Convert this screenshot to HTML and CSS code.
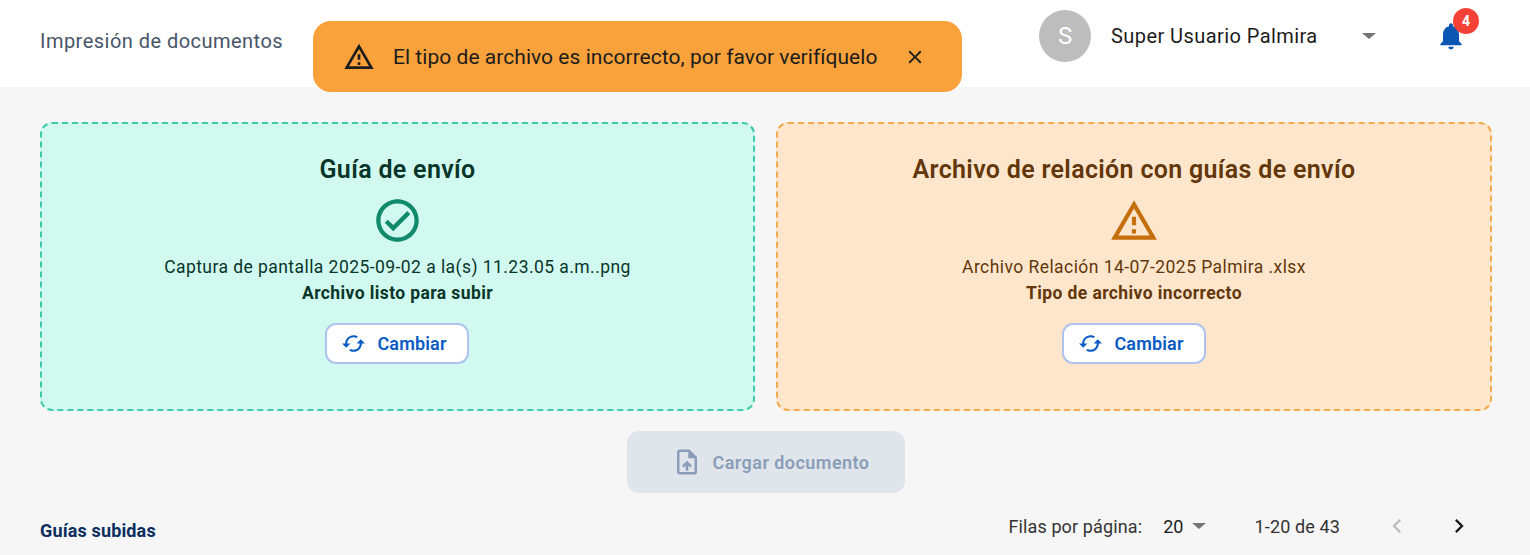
FILE: index.html
```html
<!DOCTYPE html>
<html lang="es">
<head>
    <meta charset="UTF-8">
    <meta name="viewport" content="width=device-width, initial-scale=1.0">
    <title>Impresión de documentos</title>
    <link rel="stylesheet" href="styles.css">
</head>
<body>
    <header class="topbar">
        <h1 class="page-title">Impresión de documentos</h1>
        <div class="user-area">
            <div class="avatar">S</div>
            <span class="user-name">Super Usuario Palmira</span>
            <span class="caret caret-user"></span>
            <div class="bell">
                <svg viewBox="0 0 24 24" width="32" height="32"><path fill="#0a56b4" d="M12 22c1.1 0 2-.9 2-2h-4c0 1.1.9 2 2 2zm6-6v-5c0-3.07-1.63-5.64-4.5-6.32V4c0-.83-.67-1.5-1.5-1.5s-1.5.67-1.5 1.5v.68C7.64 5.36 6 7.92 6 11v5l-2 2v1h16v-1l-2-2z"/></svg>
                <span class="badge">4</span>
            </div>
        </div>
    </header>

    <div class="toast">
        <svg viewBox="0 0 24 24" width="32" height="32"><path fill="#1c1c1c" d="M12 5.99 19.53 19H4.47L12 5.99M12 2 1 21h22L12 2zm1 14h-2v2h2v-2zm0-6h-2v4h2v-4z"/></svg>
        <span class="toast-text">El tipo de archivo es incorrecto, por favor verifíquelo</span>
        <svg class="toast-close" viewBox="0 0 24 24" width="22" height="22"><path fill="#1c1c1c" d="M19 6.41 17.59 5 12 10.59 6.41 5 5 6.41 10.59 12 5 17.59 6.41 19 12 13.41 17.59 19 19 17.59 13.41 12z"/></svg>
    </div>

    <main class="content">
        <section class="cards">
            <div class="card card-ok">
                <h2>Guía de envío</h2>
                <svg class="card-icon" viewBox="0 0 24 24" width="51" height="51"><path fill="#0f8a6a" d="M12 2C6.48 2 2 6.48 2 12s4.48 10 10 10 10-4.48 10-10S17.52 2 12 2zm0 18c-4.41 0-8-3.59-8-8s3.59-8 8-8 8 3.59 8 8-3.59 8-8 8zm4.59-12.42L10 14.17l-2.59-2.58L6 13l4 4 8-8z"/></svg>
                <p class="file-name">Captura de pantalla 2025-09-02 a la(s) 11.23.05 a.m..png</p>
                <p class="file-status">Archivo listo para subir</p>
                <button class="change-btn">
                    <svg viewBox="0 0 24 24" width="25" height="25"><path fill="#0a5bc4" d="M19 8l-4 4h3c0 3.31-2.69 6-6 6-1.01 0-1.97-.25-2.8-.7l-1.46 1.46C8.97 19.54 10.43 20 12 20c4.42 0 8-3.58 8-8h3l-4-4zM6 12c0-3.31 2.69-6 6-6 1.01 0 1.97.25 2.8.7l1.46-1.46C15.03 4.46 13.57 4 12 4c-4.42 0-8 3.58-8 8H1l4 4 4-4H6z"/></svg>
                    Cambiar
                </button>
            </div>
            <div class="card card-warn">
                <h2>Archivo de relación con guías de envío</h2>
                <svg class="card-icon" viewBox="0 0 24 24" width="50" height="50"><path fill="#c46f0c" d="M12 5.99 19.53 19H4.47L12 5.99M12 2 1 21h22L12 2zm1 14h-2v2h2v-2zm0-6h-2v4h2v-4z"/></svg>
                <p class="file-name">Archivo Relación 14-07-2025 Palmira .xlsx</p>
                <p class="file-status">Tipo de archivo incorrecto</p>
                <button class="change-btn">
                    <svg viewBox="0 0 24 24" width="25" height="25"><path fill="#0a5bc4" d="M19 8l-4 4h3c0 3.31-2.69 6-6 6-1.01 0-1.97-.25-2.8-.7l-1.46 1.46C8.97 19.54 10.43 20 12 20c4.42 0 8-3.58 8-8h3l-4-4zM6 12c0-3.31 2.69-6 6-6 1.01 0 1.97.25 2.8.7l1.46-1.46C15.03 4.46 13.57 4 12 4c-4.42 0-8 3.58-8 8H1l4 4 4-4H6z"/></svg>
                    Cambiar
                </button>
            </div>
        </section>

        <div class="upload-row">
            <button class="upload-btn" disabled>
                <svg viewBox="0 0 24 24" width="30" height="30"><path fill="#8a9db8" d="M14 2H6c-1.1 0-2 .9-2 2v16c0 1.1.9 2 2 2h12c1.1 0 2-.9 2-2V8l-6-6zm4 18H6V4h7v5h5v11zM8 15.01l1.41 1.41L11 14.84V19h2v-4.16l1.59 1.59L16 15.01 12.01 11 8 15.01z"/></svg>
                Cargar documento
            </button>
        </div>

        <div class="table-head">
            <span class="table-title">Guías subidas</span>
            <div class="pagination">
                <span class="rows-label">Filas por página:</span>
                <span class="rows-value">20</span>
                <span class="caret"></span>
                <span class="range">1-20 de 43</span>
                <svg class="page-prev" viewBox="0 0 24 24" width="28" height="28"><path fill="#bdbdbd" d="M15.41 7.41 14 6l-6 6 6 6 1.41-1.41L10.83 12z"/></svg>
                <svg class="page-next" viewBox="0 0 24 24" width="28" height="28"><path fill="#1c1c1c" d="M10 6 8.59 7.41 13.17 12l-4.58 4.59L10 18l6-6z"/></svg>
            </div>
        </div>
    </main>
</body>
</html>
```

FILE: styles.css
```css
* {
    box-sizing: border-box;
}

body {
    font-family: 'Roboto', sans-serif;
    background-color: #f6f6f6;
    margin: 0;
    padding: 0;
    overflow: hidden;
}

.topbar {
    height: 87px;
    background-color: #fff;
    display: flex;
    justify-content: space-between;
    align-items: center;
    padding: 0 63px 0 40px;
}

.page-title {
    font-size: 20px;
    font-weight: 400;
    letter-spacing: 0.47px;
    margin: 0 0 6px;
    color: #475569;
}

.user-area {
    display: flex;
    align-items: center;
    margin-bottom: 15px;
}

.avatar {
    width: 52px;
    height: 52px;
    border-radius: 50%;
    background-color: #bdbdbd;
    color: #fff;
    font-size: 24px;
    display: flex;
    align-items: center;
    justify-content: center;
}

.user-name {
    font-size: 20px;
    letter-spacing: 0.43px;
    color: #1c1c1c;
    margin-left: 20px;
    width: 251px;
}

.caret {
    width: 0;
    height: 0;
    border-left: 7px solid transparent;
    border-right: 7px solid transparent;
    border-top: 6px solid #757575;
}

.bell {
    position: relative;
    margin-left: 59px;
    display: flex;
}

.badge {
    position: absolute;
    top: -12px;
    left: 18px;
    width: 26px;
    height: 26px;
    border-radius: 50%;
    background-color: #f44336;
    color: #fff;
    font-size: 14px;
    font-weight: 700;
    display: flex;
    align-items: center;
    justify-content: center;
}

.toast {
    position: absolute;
    top: 21px;
    left: 313px;
    width: 649px;
    height: 71px;
    background-color: #f9a23b;
    border-radius: 18px;
    display: flex;
    align-items: center;
    padding: 0 0 0 30px;
}

.toast-text {
    font-size: 21px;
    letter-spacing: 0.04px;
    color: #1c1c1c;
    margin-left: 18px;
}

.toast-close {
    margin-left: 27px;
}

.content {
    padding: 35px 38px 0 40px;
}

.cards {
    display: grid;
    grid-template-columns: 715px 1fr;
    gap: 21px;
}

.card {
    height: 289px;
    border-radius: 12px;
    padding: 31px 20px 0;
    display: flex;
    flex-direction: column;
    align-items: center;
}

.card-ok {
    background-color: #d2f9ef;
    border: 2px dashed #3fcba9;
    color: #07352a;
}

.card-warn {
    background-color: #fde6cb;
    border: 2px dashed #f3aa50;
    color: #63370a;
}

.card h2 {
    font-size: 25px;
    font-weight: 600;
    letter-spacing: 0.32px;
    line-height: 30px;
    margin: 0;
}

.card-icon {
    margin: 10px 0 1px;
}

.card-ok .card-icon {
    margin-right: 1px;
}

.card-warn .card-icon {
    margin: 11px 0 1px;
}

.file-name {
    font-size: 17.5px;
    letter-spacing: 0.44px;
    line-height: 24px;
    margin: 8px 0 0;
}

.file-status {
    font-size: 17.5px;
    font-weight: 700;
    letter-spacing: 0.4px;
    line-height: 24px;
    margin: 2px 0 0;
}

.change-btn {
    margin-top: 18px;
    width: 144px;
    height: 41px;
    background-color: #fff;
    border: 2px solid #aec4ee;
    border-radius: 11px;
    color: #0a5bc4;
    font-family: inherit;
    font-size: 18px;
    font-weight: 600;
    letter-spacing: 0.15px;
    display: flex;
    align-items: center;
    justify-content: center;
    gap: 11px;
    padding: 0 6px 0 0;
}

.card-ok .change-btn {
    margin-right: 1px;
}

.upload-row {
    display: flex;
    justify-content: center;
    margin-top: 20px;
}

.upload-btn {
    width: 278px;
    height: 62px;
    background-color: #e0e5ec;
    border: none;
    border-radius: 12px;
    color: #8a9db8;
    font-family: inherit;
    font-size: 18px;
    font-weight: 600;
    letter-spacing: 0.45px;
    display: flex;
    align-items: center;
    justify-content: center;
    gap: 11px;
    padding: 0 0 0 9px;
}

.table-head {
    display: flex;
    justify-content: space-between;
    align-items: center;
    margin-top: 15px;
}

.table-title {
    font-size: 18px;
    font-weight: 700;
    letter-spacing: 0.15px;
    color: #0b2e5f;
    margin-top: 8px;
}

.pagination {
    display: flex;
    align-items: center;
    font-size: 18px;
    letter-spacing: 0.12px;
    color: #333;
    height: 36px;
}

.rows-value {
    margin-left: 21px;
    color: #1c1c1c;
}

.pagination .caret {
    margin-left: 8px;
}

.range {
    margin-left: 49px;
}

.page-prev {
    margin-left: 43px;
}

.page-next {
    margin-left: 34px;
    margin-right: 19px;
}
```
